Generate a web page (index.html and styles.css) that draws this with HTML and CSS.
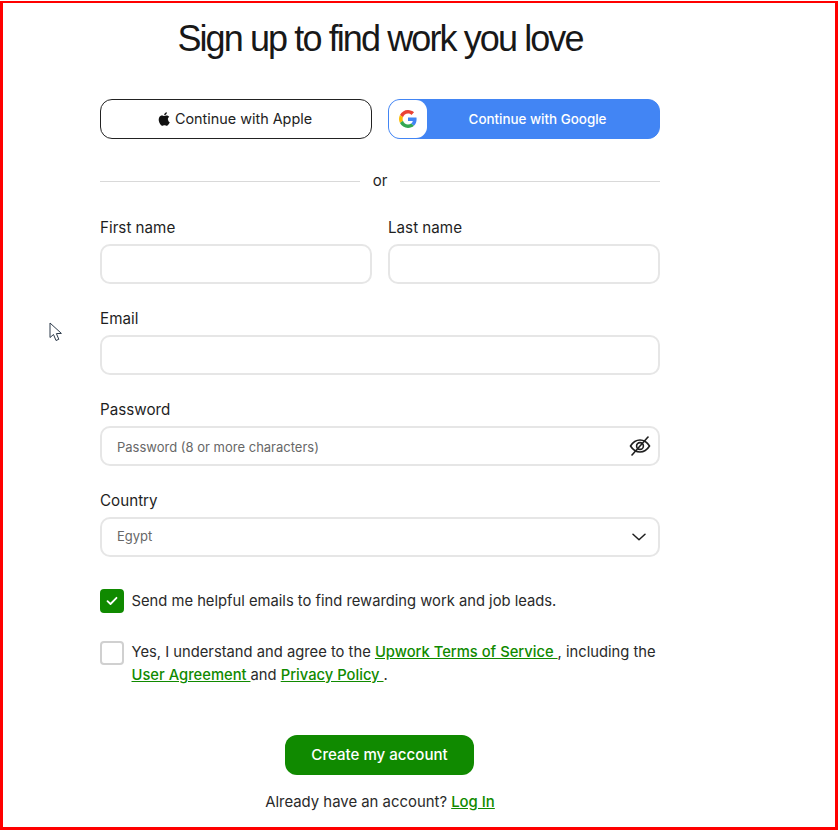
FILE: index.html
```html
<!DOCTYPE html>
<html lang="en">
  <head>
    <meta charset="UTF-8" />
    <meta name="viewport" content="width=device-width, initial-scale=1.0" />
    <title>Sign up</title>
    <link rel="stylesheet" href="styles.css">
  </head>

  <body>
    <main class="frame">
      <svg class="cursor" width="14" height="21" viewBox="0 0 14 21">
        <path d="M1 1 L1 15.5 L4.5 12.5 L7 18.5 L9.8 17.3 L7.4 11.6 L12.4 11.4 Z" fill="#fff" stroke="#2c3a4a" stroke-width="1" stroke-linejoin="round" />
      </svg>

      <form class="signup">
        <h1 class="title">Sign up to find work you love</h1>

        <div class="social">
          <button type="button" class="btn-apple">
            <svg width="12" height="14" viewBox="0 0 24 28">
              <path d="M19.6 14.8c0-3.4 2.8-5 2.9-5.1-1.6-2.300-4-2.600-4.900-2.700-2.100-.2-4.100 1.200-5.100 1.200-1.100 0-2.700-1.200-4.400-1.200-2.300 0-4.400 1.300-5.600 3.400-2.400 4.100-.6 10.300 1.700 13.600 1.100 1.600 2.500 3.500 4.300 3.400 1.700-.1 2.400-1.100 4.500-1.100s2.700 1.100 4.500 1.100c1.900 0 3-1.600 4.100-3.300 1.300-1.900 1.800-3.700 1.900-3.800-.1 0-3.400-1.300-3.400-5.500z" fill="#111" />
              <path d="M16.300 4.600c.9-1.200 1.600-2.700 1.400-4.300-1.400.1-3 .9-4 2.100-.9 1-1.600 2.600-1.400 4.100 1.500.1 3-.8 4-1.900z" fill="#111" />
            </svg>
            <span class="btn-text">Continue with Apple</span>
          </button>
          <button type="button" class="btn-google">
            <span class="google-mark">
              <svg width="18" height="18" viewBox="0 0 48 48">
                <path fill="#EA4335" d="M24 9.500c3.500 0 6.700 1.200 9.200 3.600l6.900-6.900C35.900 2.400 30.500 0 24 0 14.600 0 6.500 5.400 2.600 13.200l8 6.200C12.500 13.700 17.800 9.500 24 9.500z" />
                <path fill="#4285F4" d="M46.900 24.500c0-1.600-.1-3.100-.4-4.500H24v9h12.900c-.6 3-2.200 5.500-4.700 7.200l7.700 6c4.500-4.200 7-10.300 7-17.700z" />
                <path fill="#FBBC05" d="M10.500 28.600c-.5-1.400-.8-3-.8-4.600s.3-3.200.8-4.600l-8-6.200C.9 16.500 0 20.100 0 24s.9 7.500 2.600 10.800l7.900-6.200z" />
                <path fill="#34A853" d="M24 48c6.500 0 11.900-2.100 15.900-5.800l-7.700-6c-2.100 1.400-4.900 2.300-8.200 2.300-6.200 0-11.500-4.200-13.400-9.900l-8 6.200C6.500 42.600 14.600 48 24 48z" />
              </svg>
            </span>
            <span class="google-label">Continue with Google</span>
          </button>
        </div>

        <div class="divider"><span>or</span></div>

        <div class="name-row">
          <div class="field">
            <label class="label">First name</label>
            <div class="input"></div>
          </div>
          <div class="field">
            <label class="label">Last name</label>
            <div class="input"></div>
          </div>
        </div>

        <div class="field">
          <label class="label">Email</label>
          <div class="input"></div>
        </div>

        <div class="field">
          <label class="label">Password</label>
          <div class="input">
            <span class="placeholder">Password (8 or more characters)</span>
            <svg width="24" height="24" viewBox="0 0 24 24" fill="none" stroke="#1f1f1f" stroke-width="1.600" stroke-linecap="round">
              <path d="M2.500 12C5 8 8.300 6 12 6s7 2 9.500 6c-2.500 4-5.800 6-9.500 6s-7-2-9.500-6z" />
              <circle cx="12" cy="12" r="3.400" />
              <path d="M20 3L4 21" />
            </svg>
          </div>
        </div>

        <div class="field">
          <label class="label">Country</label>
          <div class="input">
            <span class="value">Egypt</span>
            <svg class="chevron" width="14" height="8" viewBox="0 0 14 8" fill="none" stroke="#1f1f1f" stroke-width="1.500" stroke-linecap="round" stroke-linejoin="round">
              <path d="M1 1.200L7 6.800L13 1.200" />
            </svg>
          </div>
        </div>

        <div class="check-row check-first">
          <span class="box checked">
            <svg width="12" height="10" viewBox="0 0 12 10" fill="none" stroke="#fff" stroke-width="1.800" stroke-linecap="round" stroke-linejoin="round">
              <path d="M1.500 5.200L4.500 8L10.500 1.800" />
            </svg>
          </span>
          <p>Send me helpful emails to find rewarding work and job leads.</p>
        </div>

        <div class="check-row check-second">
          <span class="box"></span>
          <p>Yes, I understand and agree to the <a href="#">Upwork Terms of Service </a>, including the <a href="#">User Agreement </a>and <a href="#">Privacy Policy </a>.</p>
        </div>

        <div class="submit-row">
          <button type="button" class="btn-create">Create my account</button>
        </div>
        <p class="login">Already have an account? <a href="#">Log In</a></p>
      </form>
    </main>
  </body>
</html>
```

FILE: styles.css
```css
* {
  box-sizing: border-box;
}

html,
body {
  margin: 0;
  background: #fff;
}

body {
  font-family: Inter, "Liberation Sans", sans-serif;
  color: #1f1f1f;
  padding-top: 1px;
}

.frame {
  position: relative;
  width: 838px;
  height: 829px;
  border: 3px solid #f00;
  border-top-width: 2px;
  padding-left: 97px;
  overflow: hidden;
}

.cursor {
  position: absolute;
  left: 46px;
  top: 319px;
}

.signup {
  width: 560px;
}

.title {
  margin: 0;
  height: 96px;
  padding-top: 14px;
  font-family: "Liberation Sans", Arial, sans-serif;
  font-size: 36px;
  line-height: 44px;
  font-weight: 400;
  letter-spacing: -1.900px;
  text-align: center;
  color: #181818;
  white-space: nowrap;
}

.social {
  display: grid;
  grid-template-columns: 1fr 1fr;
  gap: 16px;
}

.social button {
  height: 40px;
  padding-bottom: 2px;
  font-family: inherit;
  border-radius: 12px;
  cursor: pointer;
}

.btn-apple {
  display: flex;
  align-items: center;
  justify-content: center;
  gap: 5px;
  font-size: 14.400px;
  background: #fff;
  border: 1px solid #222;
  color: #222;
}

.social .btn-apple {
  padding-right: 8px;
}

.btn-google {
  display: flex;
  align-items: center;
  background: #4285f4;
  border: 1px solid #4285f4;
  color: #fff;
  font-size: 13.400px;
  font-weight: 500;
}

.social .btn-google {
  padding: 0;
}

.google-mark {
  display: flex;
  align-items: center;
  justify-content: center;
  width: 38px;
  height: 38px;
  background: #fff;
  border-radius: 11px;
}

.google-label {
  flex: 1;
  margin-top: -1px;
  padding-right: 11px;
  text-align: center;
}

.divider {
  display: flex;
  align-items: center;
  gap: 12px;
  height: 22px;
  margin-top: 30px;
  font-size: 15px;
}

.divider::before,
.divider::after {
  content: "";
  flex: 1;
  height: 1px;
  margin-top: 2px;
  background: #d9d9d9;
}

.divider span {
  padding: 0 1px;
}

.name-row {
  display: grid;
  grid-template-columns: 1fr 1fr;
  gap: 16px;
  margin-top: 26px;
}

.field {
  margin-bottom: 24px;
}

.name-row .field {
  margin-bottom: 0;
}

.name-row + .field {
  margin-top: 24px;
}

.label {
  display: block;
  height: 27px;
  font-size: 15.200px;
  line-height: 22px;
}

.input {
  display: flex;
  align-items: center;
  justify-content: space-between;
  height: 40px;
  padding: 0 6px 0 15px;
  border: 2px solid #e6e6e6;
  border-radius: 10px;
  background: #fff;
  font-size: 13px;
  color: #676767;
}

.placeholder {
  margin-top: 2px;
}

.value {
  margin-bottom: 2px;
}

.chevron {
  margin-right: 6px;
}

.check-row {
  display: flex;
  gap: 7.500px;
  font-size: 14.750px;
  line-height: 23px;
}

.check-row p {
  margin: 0;
  color: #2a2a2a;
}

.check-first {
  margin-top: 32px;
  align-items: center;
}

.check-second {
  margin-top: 28px;
}

.box {
  flex: none;
  display: flex;
  align-items: center;
  justify-content: center;
  width: 24px;
  height: 24px;
  border: 2px solid #d0d0d0;
  border-radius: 4px;
  background: #fff;
}

.box.checked {
  background: #108a00;
  border-color: #108a00;
}

a {
  color: #108a00;
  font-weight: 500;
  text-decoration: underline;
}

.submit-row {
  display: flex;
  justify-content: center;
  margin-top: 48px;
  padding-right: 1px;
}

.btn-create {
  width: 189px;
  height: 40px;
  padding-bottom: 2px;
  border: 0;
  border-radius: 12px;
  background: #108a00;
  color: #fff;
  font-family: inherit;
  font-size: 15.100px;
  font-weight: 500;
  cursor: pointer;
}

.login {
  margin: 17px 0 0;
  font-size: 14.900px;
  line-height: 20px;
  text-align: center;
  color: #2a2a2a;
}
```
